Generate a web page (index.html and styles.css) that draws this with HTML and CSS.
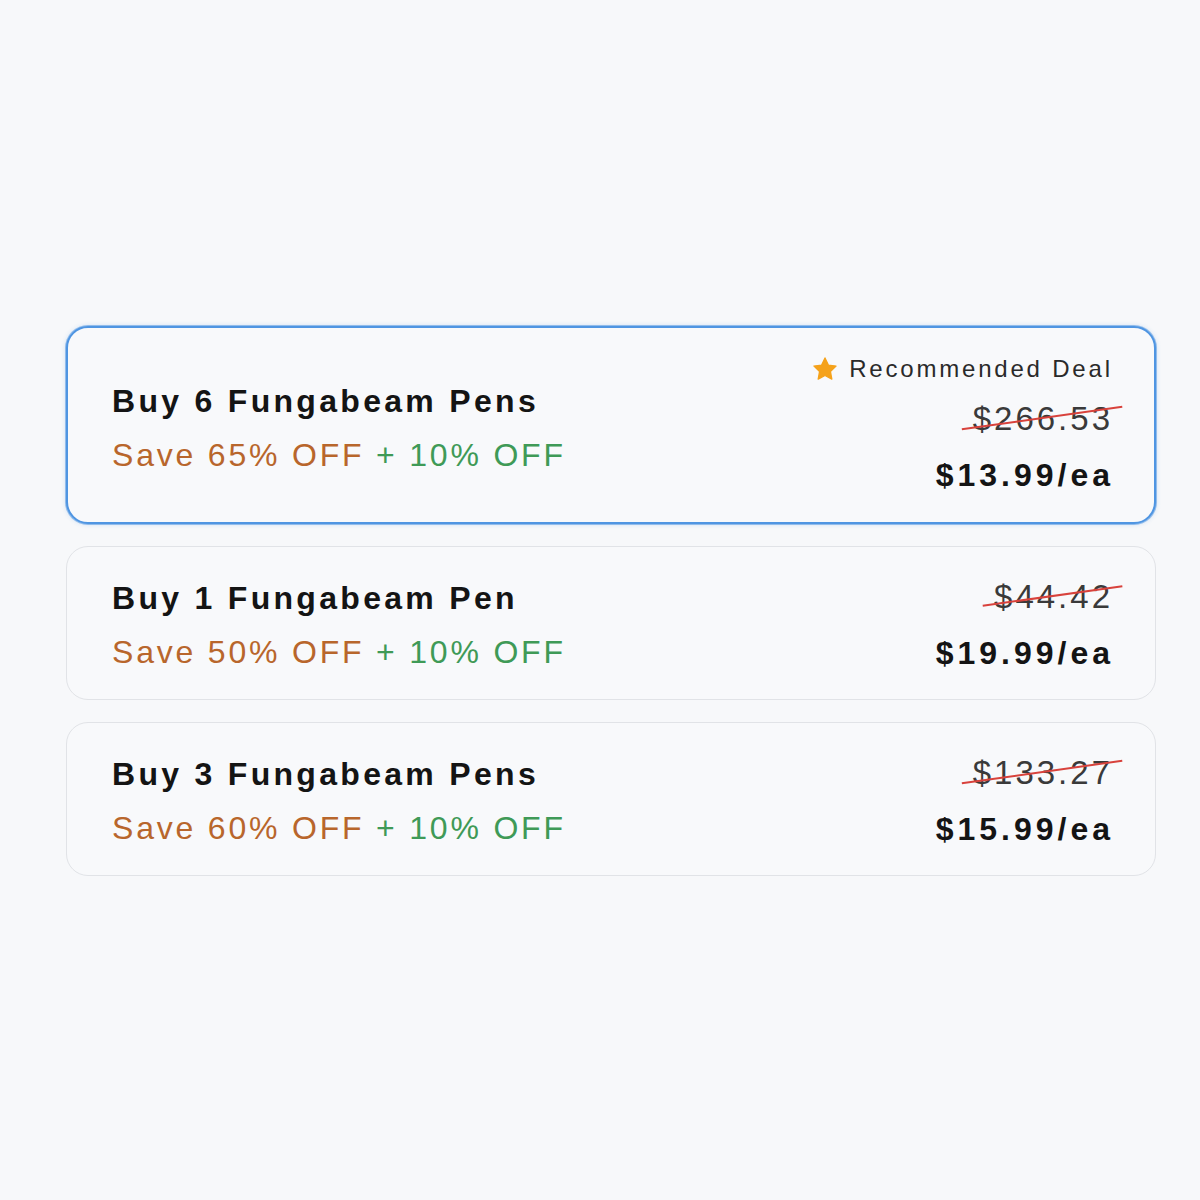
FILE: index.html
```html
<!DOCTYPE html>
<html lang="en">
<head>
<meta charset="utf-8">
<title>Bundle offers</title>
<link rel="stylesheet" href="styles.css">
</head>
<body>
<main class="offers">
  <div class="offer offer--selected">
    <div class="offer-info">
      <div class="offer-title">Buy 6 Fungabeam Pens</div>
      <div class="offer-save"><span class="save-main">Save 65% OFF</span> <span class="save-extra">+ 10% OFF</span></div>
    </div>
    <div class="offer-price">
      <div class="badge">
        <svg class="star" viewBox="0 0 24 24" width="26" height="26" aria-hidden="true">
          <path d="M12 1.8l3.1 6.6 7.1.9-5.2 5 1.3 7.1L12 18l-6.3 3.4L7 14.3l-5.2-5 7.1-.9z" fill="#f5a21b" stroke="#f5a21b" stroke-width="1.2" stroke-linejoin="round"/>
        </svg>
        <span>Recommended Deal</span>
      </div>
      <div class="was"><span class="strike">$266.53</span></div>
      <div class="now">$13.99/ea</div>
    </div>
  </div>

  <div class="offer">
    <div class="offer-info">
      <div class="offer-title">Buy 1 Fungabeam Pen</div>
      <div class="offer-save"><span class="save-main">Save 50% OFF</span> <span class="save-extra">+ 10% OFF</span></div>
    </div>
    <div class="offer-price">
      <div class="was"><span class="strike">$44.42</span></div>
      <div class="now">$19.99/ea</div>
    </div>
  </div>

  <div class="offer">
    <div class="offer-info">
      <div class="offer-title">Buy 3 Fungabeam Pens</div>
      <div class="offer-save"><span class="save-main">Save 60% OFF</span> <span class="save-extra">+ 10% OFF</span></div>
    </div>
    <div class="offer-price">
      <div class="was"><span class="strike">$133.27</span></div>
      <div class="now">$15.99/ea</div>
    </div>
  </div>
</main>
</body>
</html>
```

FILE: styles.css
```css
html, body {
  margin: 0;
  padding: 0;
  background: #f7f8fa;
}

body {
  font-family: "Liberation Sans", Arial, Helvetica, sans-serif;
  color: #111;
}

.offers {
  display: flex;
  flex-direction: column;
  gap: 22px;
  width: 1090px;
  margin: 326px 0 0 66px;
}

.offer {
  display: flex;
  justify-content: space-between;
  align-items: center;
  padding: 27px 45px 23px 45px;
  border: 1px solid #e1e3e7;
  border-radius: 22px;
  background: #f8f9fb;
}

.offer--selected {
  padding: 26px 44px 24px 44px;
  border: 2px solid #4f95e2;
  box-shadow: 0 0 0 1px rgba(79, 149, 226, 0.55), 0 0 5px rgba(79, 149, 226, 0.3);
}

.offer--selected .offer-info {
  padding-top: 4px;
}

.offer-info {
  display: flex;
  flex-direction: column;
  gap: 14px;
}

.offer-title {
  font-size: 32px;
  font-weight: 700;
  line-height: 40px;
  letter-spacing: 3.3px;
  color: #141414;
}

.offer-save {
  font-size: 32px;
  line-height: 40px;
  letter-spacing: 2.8px;
}

.save-main {
  color: #b8662c;
}

.save-extra {
  color: #3f9a57;
}

.offer-price {
  display: flex;
  flex-direction: column;
  align-items: flex-end;
}

.badge {
  display: flex;
  align-items: center;
  gap: 11px;
  font-size: 24px;
  line-height: 30px;
  letter-spacing: 2.8px;
  margin-right: -2.8px;
  color: #2a2a2a;
  margin-bottom: 12px;
}

.star {
  display: block;
}

.was {
  font-size: 33px;
  line-height: 46px;
  letter-spacing: 3px;
  margin-right: -3px;
  color: #3a3a3a;
}

.strike {
  position: relative;
  display: inline-block;
}

/* red slash across the old price */
.strike::after {
  content: "";
  position: absolute;
  left: -12px;
  right: -10px;
  top: 50%;
  height: 1.5px;
  background: #d8423c;
  transform: translateY(-2px) rotate(-8deg);
}

.now {
  margin-top: 10px;
  font-size: 32px;
  font-weight: 700;
  line-height: 46px;
  letter-spacing: 4px;
  margin-right: -4px;
  color: #141414;
}
```
